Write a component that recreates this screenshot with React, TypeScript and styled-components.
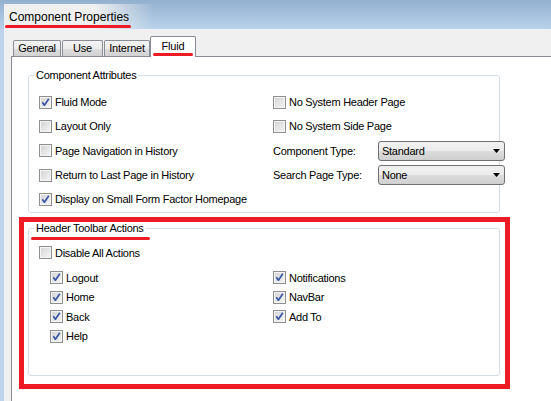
import React from "react";
import styled, { createGlobalStyle } from "styled-components";

const uiFont = `"Liberation Sans", Arial, sans-serif`;
const penRed = "#ed1c24";

const GlobalStyle = createGlobalStyle`
  html, body {
    margin: 0;
    padding: 0;
    background: #bdd5ec;
  }
  body {
    font-family: ${uiFont};
    font-size: 11px;
    color: #000;
  }
  * {
    box-sizing: border-box;
  }
`;

const Frame = styled.div`
  width: 551px;
  height: 401px;
  overflow: hidden;
  display: flex;
  flex-direction: column;
  padding: 4px 0 0 4px;
  background: linear-gradient(#93b0cf, #b9d2ea 29px, #bdd5ec 29px);
`;

const TitleBar = styled.div`
  height: 25px;
  flex-shrink: 0;
  display: flex;
`;

const Title = styled.h1`
  position: relative;
  margin: 0;
  width: 150px;
  padding: 6px 0 0 5px;
  font: normal 12px/14px ${uiFont};
  background: linear-gradient(to right, #f0f0f0 60%, rgba(240, 240, 240, 0));
`;

// hand-drawn red underline used as a highlight
const PenMark = styled.span<{ $left: number; $right: number; $top: number }>`
  position: absolute;
  left: ${(p) => p.$left}px;
  right: ${(p) => p.$right}px;
  top: ${(p) => p.$top}px;
  height: 3px;
  border-radius: 2px;
  background: ${penRed};
`;

const Client = styled.div`
  flex: 1;
  min-height: 0;
  display: flex;
  flex-direction: column;
  padding-left: 7px;
  background: #f0f0f0;
`;

const TabStrip = styled.div`
  height: 27px;
  flex-shrink: 0;
  display: flex;
  align-items: flex-end;
  gap: 1px;
  padding-left: 2px;
`;

const Tab = styled.div<{ $active?: boolean; $width: number }>`
  position: relative;
  z-index: ${(p) => (p.$active ? 1 : 0)};
  width: ${(p) => p.$width}px;
  height: ${(p) => (p.$active ? 21 : 16)}px;
  margin-bottom: ${(p) => (p.$active ? -1 : 0)}px;
  margin-left: ${(p) => (p.$active ? -1 : 0)}px;
  padding-top: ${(p) => (p.$active ? 2 : 0)}px;
  border: 1px solid #898c95;
  border-bottom: none;
  border-radius: 2px 2px 0 0;
  background: ${(p) =>
    p.$active
      ? "#fff"
      : "linear-gradient(#f3f3f3, #ececec 50%, #dedede 50%, #d2d2d2)"};
  text-align: center;
  line-height: 14px;
  letter-spacing: -0.2px;
`;

const Panel = styled.div`
  flex: 1;
  display: flex;
  flex-direction: column;
  align-items: flex-start;
  padding: 11px 0 0 7px;
  background: #fff;
  border-top: 1px solid #898c95;
  border-left: 1px solid #898c95;
`;

const GroupBox = styled.fieldset<{ $inset?: number }>`
  margin: 0 0 0 ${(p) => p.$inset ?? 0}px;
  padding: 0;
  width: 472px;
  min-width: 0;
  border: 1px solid #d5dfe5;
  border-radius: 3px;
`;

const Legend = styled.legend<{ $lh: number }>`
  position: relative;
  margin-left: 5px;
  padding: 0 2px;
  line-height: ${(p) => p.$lh}px;
  letter-spacing: -0.27px;
`;

const AttrGrid = styled.div`
  display: grid;
  grid-template-columns: 234px 1fr;
  grid-template-rows: repeat(5, 24.3px);
  grid-auto-flow: column;
  padding: 8px 0 1px 10px;
`;

const Row = styled.label<{ $height?: number }>`
  display: flex;
  align-items: center;
  gap: 3px;
  height: ${(p) => (p.$height ? `${p.$height}px` : "100%")};
  white-space: nowrap;
  letter-spacing: -0.27px;
`;

const FieldRow = styled.div`
  display: flex;
  align-items: center;
  white-space: nowrap;
  letter-spacing: -0.27px;
`;

const FieldLabel = styled.span`
  width: 105px;
  flex-shrink: 0;
`;

const Combo = styled.div`
  position: relative;
  flex-shrink: 0;
  display: flex;
  align-items: center;
  justify-content: space-between;
  width: 127px;
  height: 20px;
  padding: 0 4px 0 3px;
  border: 1px solid #707070;
  border-radius: 3px;
  background: linear-gradient(#f2f2f2, #ebebeb 50%, #dddddd 50%, #cfcfcf);
`;

const Box = styled.span`
  display: inline-flex;
  flex-shrink: 0;
  width: 13px;
  height: 13px;
  border: 1px solid #8e8f8f;
  box-shadow: inset 0 0 0 1px #f4f4f4;
  background: linear-gradient(135deg, #d2d2d2, #f7f7f7);
`;

const Highlight = styled.div`
  margin-top: 3.5px;
  border: 5px solid ${penRed};
  padding: 0 5px 8px 4px;
`;

const ActionsBody = styled.div`
  padding: 8px 0 29px 10px;
`;

const ActionGrid = styled.div`
  display: grid;
  grid-template-columns: 223px 1fr;
  grid-template-rows: repeat(4, 19.5px);
  grid-auto-flow: column;
  margin: 5px 0 0 11px;
`;

function CheckBox({ checked }: { checked?: boolean }) {
  return (
    <Box>
      {checked && (
        <svg width="11" height="11" viewBox="0 0 11 11">
          <path
            d="M2.3 5.2 L4.4 8.2 L8.8 1.8"
            fill="none"
            stroke="#3b55a3"
            strokeWidth="1.7"
            strokeLinejoin="round"
          />
        </svg>
      )}
    </Box>
  );
}

function Check({ label, checked }: { label: string; checked?: boolean }) {
  return (
    <Row>
      <CheckBox checked={checked} />
      {label}
    </Row>
  );
}

function Select({ label, value }: { label: string; value: string }) {
  return (
    <FieldRow>
      <FieldLabel>{label}</FieldLabel>
      <Combo>
        <span>{value}</span>
        <svg width="7" height="4" viewBox="0 0 7 4">
          <polygon points="0,0 7,0 3.5,4" fill="#000" />
        </svg>
      </Combo>
    </FieldRow>
  );
}

const tabs = [
  { name: "General", width: 48 },
  { name: "Use", width: 41 },
  { name: "Internet", width: 46 },
];

const actions: [string, boolean][] = [
  ["Logout", true],
  ["Home", true],
  ["Back", true],
  ["Help", true],
  ["Notifications", true],
  ["NavBar", true],
  ["Add To", true],
];

export default function App() {
  return (
    <>
      <GlobalStyle />
      <Frame>
        <TitleBar>
          <Title>
            Component Properties
            <PenMark $left={1} $right={23} $top={21} />
          </Title>
        </TitleBar>
        <Client>
          <TabStrip>
            {tabs.map((t) => (
              <Tab key={t.name} $width={t.width}>
                {t.name}
              </Tab>
            ))}
            <Tab $active $width={46}>
              Fluid
              <PenMark $left={2} $right={2} $top={16} />
            </Tab>
          </TabStrip>
          <Panel>
            <GroupBox $inset={9}>
              <Legend $lh={14}>Component Attributes</Legend>
              <AttrGrid>
                <Check label="Fluid Mode" checked />
                <Check label="Layout Only" />
                <Check label="Page Navigation in History" />
                <Check label="Return to Last Page in History" />
                <Check label="Display on Small Form Factor Homepage" checked />
                <Check label="No System Header Page" />
                <Check label="No System Side Page" />
                <Select label="Component Type:" value="Standard" />
                <Select label="Search Page Type:" value="None" />
              </AttrGrid>
            </GroupBox>
            <Highlight>
              <GroupBox>
                <Legend $lh={13}>
                  Header Toolbar Actions
                  <PenMark $left={-3} $right={-4} $top={15} />
                </Legend>
                <ActionsBody>
                  <Row $height={20}>
                    <CheckBox />
                    Disable All Actions
                  </Row>
                  <ActionGrid>
                    {actions.map(([name, on]) => (
                      <Check key={name} label={name} checked={on} />
                    ))}
                  </ActionGrid>
                </ActionsBody>
              </GroupBox>
            </Highlight>
          </Panel>
        </Client>
      </Frame>
    </>
  );
}
